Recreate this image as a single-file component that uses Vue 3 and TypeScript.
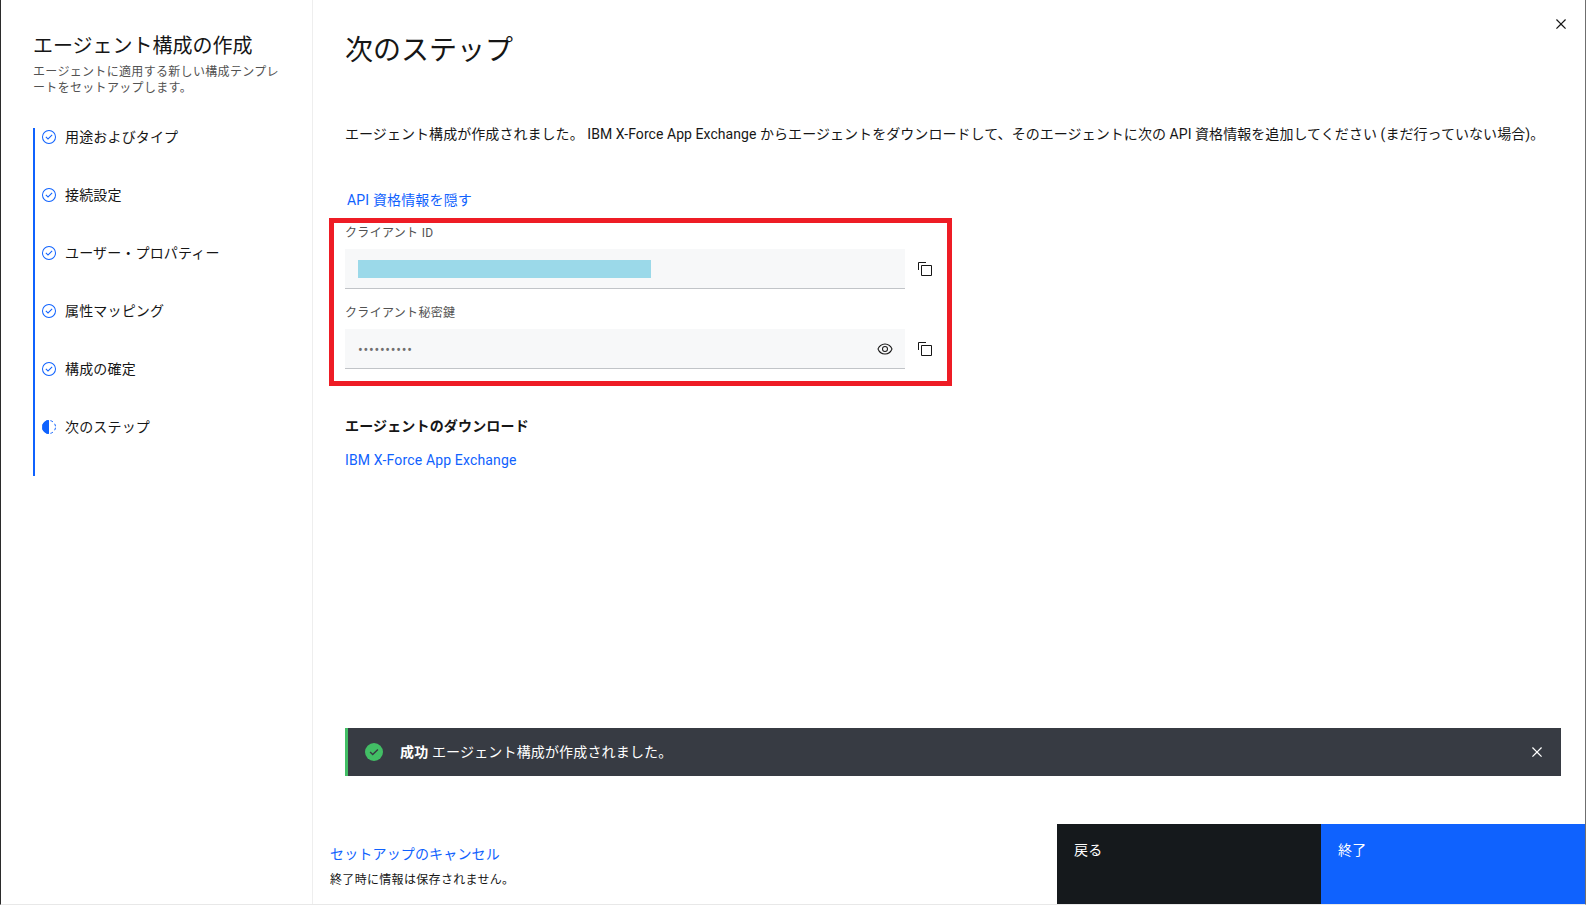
<script setup lang="ts">
const steps = [
  { label: "用途およびタイプ", done: true },
  { label: "接続設定", done: true },
  { label: "ユーザー・プロパティー", done: true },
  { label: "属性マッピング", done: true },
  { label: "構成の確定", done: true },
  { label: "次のステップ", done: false },
];
</script>

<template>
  <div class="page">
    <aside class="side">
      <h2 class="side-title">エージェント構成の作成</h2>
      <p class="side-desc">エージェントに適用する新しい構成テンプレートをセットアップします。</p>
      <ul class="steps">
        <li v-for="step in steps" :key="step.label" class="step">
          <svg v-if="step.done" class="step-icon" viewBox="0 0 32 32" fill="#0f62fe">
            <polygon points="14 21.414 9 16.413 10.413 15 14 18.586 21.585 11 23 12.415 14 21.414" />
            <path d="M16,2A14,14,0,1,0,30,16,14,14,0,0,0,16,2Zm0,26A12,12,0,1,1,28,16,12,12,0,0,1,16,28Z" />
          </svg>
          <svg v-else class="step-icon" viewBox="0 0 32 32" fill="#0f62fe">
            <path d="M16,2A14,14,0,0,0,16,30Z" />
            <circle cx="16" cy="16" r="13" fill="none" stroke="#0f62fe" stroke-width="2" stroke-dasharray="5.2 5" stroke-dashoffset="-1.5" />
          </svg>
          <span>{{ step.label }}</span>
        </li>
      </ul>
    </aside>

    <main class="main">
      <div class="content">
        <h1 class="heading">次のステップ</h1>
        <p class="intro">エージェント構成が作成されました。 IBM X-Force App Exchange からエージェントをダウンロードして、そのエージェントに次の API 資格情報を追加してください (まだ行っていない場合)。</p>
        <a class="link toggle" href="#">API 資格情報を隠す</a>

        <section class="creds">
          <label class="field-label">クライアント ID</label>
          <div class="field-row">
            <div class="field">
              <span class="redacted"></span>
            </div>
            <svg class="copy" viewBox="0 0 32 32" fill="#161616">
              <path d="M28,10V28H10V10H28m0-2H10a2,2,0,0,0-2,2V28a2,2,0,0,0,2,2H28a2,2,0,0,0,2-2V10a2,2,0,0,0-2-2Z" />
              <path d="M4,18H2V4A2,2,0,0,1,4,2H18V4H4Z" />
            </svg>
          </div>
          <label class="field-label second">クライアント秘密鍵</label>
          <div class="field-row">
            <div class="field">
              <span class="dots">••••••••••</span>
              <svg class="eye" viewBox="0 0 32 32" fill="#161616">
                <path d="M30.94,15.66A16.69,16.69,0,0,0,16,5,16.69,16.69,0,0,0,1.06,15.66a1,1,0,0,0,0,.68A16.69,16.69,0,0,0,16,27,16.69,16.69,0,0,0,30.94,16.34,1,1,0,0,0,30.94,15.66ZM16,25c-5.3,0-10.9-3.93-12.93-9C5.1,10.93,10.7,7,16,7s10.9,3.93,12.93,9C26.9,21.07,21.3,25,16,25Z" />
                <path d="M16,10a6,6,0,1,0,6,6A6,6,0,0,0,16,10Zm0,10a4,4,0,1,1,4-4A4,4,0,0,1,16,20Z" />
              </svg>
            </div>
            <svg class="copy" viewBox="0 0 32 32" fill="#161616">
              <path d="M28,10V28H10V10H28m0-2H10a2,2,0,0,0-2,2V28a2,2,0,0,0,2,2H28a2,2,0,0,0,2-2V10a2,2,0,0,0-2-2Z" />
              <path d="M4,18H2V4A2,2,0,0,1,4,2H18V4H4Z" />
            </svg>
          </div>
        </section>

        <h3 class="download">エージェントのダウンロード</h3>
        <a class="link" href="#">IBM X-Force App Exchange</a>
      </div>

      <div class="notice">
        <svg class="notice-icon" viewBox="0 0 20 20">
          <circle cx="10" cy="10" r="9" fill="#42be65" />
          <path d="M8.7 13.6 5.6 10.5l1-1 2.1 2.1 4.7-4.7 1 1z" fill="#373b43" />
        </svg>
        <span class="notice-text"><strong>成功</strong> エージェント構成が作成されました。</span>
        <svg class="notice-close" viewBox="0 0 32 32" fill="#ffffff">
          <polygon points="24 9.4 22.6 8 16 14.6 9.4 8 8 9.4 14.6 16 8 22.6 9.4 24 16 17.4 22.6 24 24 22.6 17.4 16 24 9.4" />
        </svg>
      </div>

      <footer class="footer">
        <div class="cancel">
          <a class="link" href="#">セットアップのキャンセル</a>
          <p class="cancel-note">終了時に情報は保存されません。</p>
        </div>
        <button type="button" class="btn back">戻る</button>
        <button type="button" class="btn finish">終了</button>
      </footer>
    </main>

    <svg class="close" viewBox="0 0 32 32" fill="#161616">
      <polygon points="24 9.4 22.6 8 16 14.6 9.4 8 8 9.4 14.6 16 8 22.6 9.4 24 16 17.4 22.6 24 24 22.6 17.4 16 24 9.4" />
    </svg>
  </div>
</template>

<style>
html,
body {
  margin: 0;
  background: #ffffff;
}
</style>

<style scoped>
.page {
  position: relative;
  box-sizing: border-box;
  width: 1586px;
  height: 905px;
  display: flex;
  overflow: hidden;
  background: #ffffff;
  color: #161616;
  border-left: 1px solid #2b2b2b;
  border-right: 1px solid #6f6f6f;
  border-bottom: 1px solid #e8e8e8;
  font-family: "Roboto", "Noto Sans CJK JP", sans-serif;
  font-size: 14px;
  letter-spacing: 0.16px;
}

.side {
  box-sizing: border-box;
  width: 312px;
  flex: none;
  padding: 32px 32px 0;
  border-right: 1px solid #eeeeee;
}

.side-title {
  margin: 0;
  font-size: 20px;
  font-weight: 400;
  line-height: 28px;
  letter-spacing: 0;
  white-space: nowrap;
}

.side-desc {
  margin: 4px 0 0;
  font-size: 12px;
  line-height: 16px;
  letter-spacing: 0.32px;
  color: #525252;
  width: 248px;
}

.steps {
  list-style: none;
  margin: 32px 0 0;
  padding: 0 0 0 6px;
  border-left: 2px solid #0f62fe;
}

.step {
  height: 58px;
  display: flex;
  align-items: flex-start;
  gap: 8px;
  line-height: 18px;
}

.step-icon {
  width: 16px;
  height: 16px;
  flex: none;
  margin-top: 1px;
}

.main {
  flex: 1;
  min-width: 0;
  display: flex;
  flex-direction: column;
}

.content {
  padding: 33px 0 0 32px;
}

.heading {
  margin: 0;
  font-size: 28px;
  font-weight: 400;
  line-height: 36px;
  letter-spacing: 0;
}

.intro {
  margin: 55px 0 0;
  line-height: 20px;
  letter-spacing: 0.06px;
  white-space: nowrap;
}

.link {
  color: #0f62fe;
  text-decoration: none;
  line-height: 20px;
}

.toggle {
  display: block;
  margin: 46px 0 0 2px;
}

.creds {
  box-sizing: border-box;
  width: 623px;
  margin: 8px 0 0 -16px;
  padding: 2px 0 12px 11px;
  border: 5px solid #ee1c25;
}

.field-label {
  display: block;
  font-size: 12px;
  line-height: 16px;
  letter-spacing: 0.32px;
  color: #525252;
  margin-bottom: 8px;
}

.field-label.second {
  margin-top: 16px;
}

.field-row {
  display: flex;
  align-items: center;
  gap: 12px;
}

.field {
  box-sizing: border-box;
  width: 560px;
  height: 40px;
  padding: 0 12px 0 13px;
  display: flex;
  align-items: center;
  justify-content: space-between;
  background: #f7f8f9;
  border-bottom: 1px solid #c1c4c8;
}

.redacted {
  width: 293px;
  height: 18px;
  background: #9bd9e9;
}

.dots {
  padding-top: 2px;
  font-size: 14px;
  letter-spacing: 0.75px;
  color: #6f6f6f;
}

.eye {
  width: 16px;
  height: 16px;
}

.copy {
  width: 16px;
  height: 16px;
  flex: none;
}

.download {
  margin: 30px 0 0;
  font-size: 14px;
  font-weight: 600;
  line-height: 20px;
}

.content > .link:last-child {
  display: block;
  margin-top: 14px;
}

.notice {
  box-sizing: border-box;
  height: 48px;
  margin: auto 24px 48px 32px;
  padding-left: 16px;
  display: flex;
  align-items: center;
  background: #373b43;
  border-left: 3px solid #42be65;
  color: #ffffff;
}

.notice-icon {
  width: 20px;
  height: 20px;
  flex: none;
}

.notice-text {
  margin-left: 16px;
  line-height: 20px;
}

.notice-text strong {
  font-weight: 600;
}

.notice-close {
  width: 20px;
  height: 20px;
  margin-left: auto;
  margin-right: 14px;
}

.footer {
  height: 80px;
  flex: none;
  display: flex;
}

.cancel {
  flex: 1;
  padding: 20px 0 0 17px;
}

.cancel-note {
  margin: 8px 0 0;
  font-size: 12px;
  line-height: 16px;
  letter-spacing: 0.32px;
  color: #161616;
}

.btn {
  width: 264px;
  border: none;
  padding: 16px 17px 0;
  text-align: left;
  display: flex;
  align-items: flex-start;
  font: inherit;
  line-height: 20px;
  letter-spacing: 0.16px;
  color: #ffffff;
}

.back {
  background: #15191c;
}

.finish {
  background: #0f62fe;
}

.close {
  position: absolute;
  top: 14px;
  right: 14px;
  width: 20px;
  height: 20px;
}
</style>
